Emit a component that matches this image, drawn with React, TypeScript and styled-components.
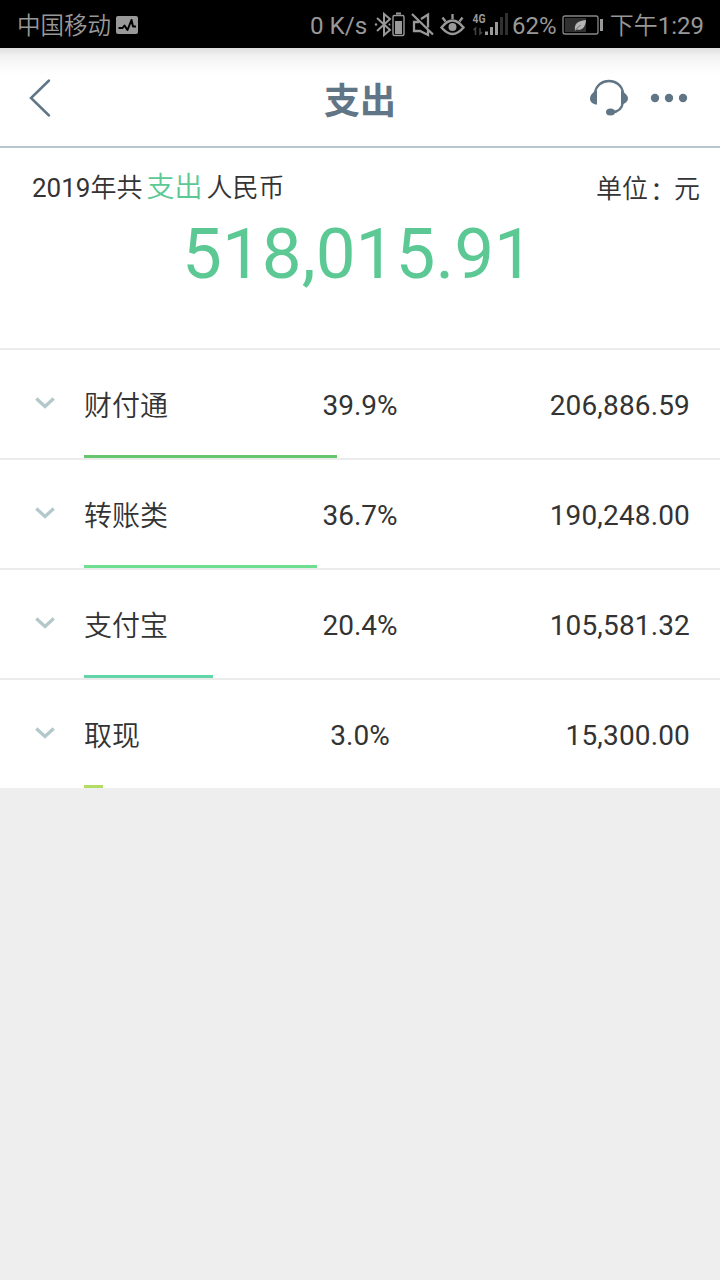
import React from "react";
import styled, { createGlobalStyle } from "styled-components";

const GlobalStyle = createGlobalStyle`
  * { box-sizing: border-box; }
  html, body, #root { height: 100%; }
  body {
    margin: 0;
    background: #eeeeee;
    color: #333333;
    font-family: Roboto, "Noto Sans CJK SC", sans-serif;
  }
`;

const Screen = styled.main`
  width: 720px;
  height: 1280px;
  overflow: hidden;
  background: #eeeeee;
`;

const StatusBar = styled.div`
  display: flex;
  align-items: center;
  height: 48px;
  padding: 2px 16px 0 17px;
  background: #000;
  color: #989898;
  font-size: 24px;
  line-height: 44px;
  white-space: nowrap;
`;

const Carrier = styled.span`
  width: 99px;
  padding-top: 2px;
  font-size: 23.5px;
  font-weight: 350;
`;

const Speed = styled.span`
  width: 64px;
  margin-left: 171px;
  padding-top: 1px;
  font-size: 24.2px;
`;

const StatusIcons = styled.svg`
  flex: none;
  display: block;
  width: 138px;
  height: 46px;
`;

const Percent = styled.span`
  width: 50px;
  padding-top: 1px;
  font-size: 24px;
`;

const Clock = styled.span`
  margin-left: auto;
  padding-top: 1px;
  font-size: 24px;
  font-weight: 350;
`;

const Digits = styled.span`
  font-weight: 400;
`;

const Header = styled.header`
  display: grid;
  grid-template-columns: 1fr auto 1fr;
  align-items: center;
  height: 100px;
  padding: 2px 28px 0;
  border-bottom: 2px solid #b8c6ce;
  background: linear-gradient(#dedede 0, #f0f0f0 7px, #fafafa 18px, #fff 28px);
`;

const Title = styled.h1`
  margin: 8px 0 0;
  color: #607585;
  font-size: 36px;
  font-weight: 700;
  line-height: 50px;
`;

const HeaderActions = styled.div`
  display: flex;
  justify-content: flex-end;
  align-items: center;
  gap: 20px;
`;

const Icon = styled.svg`
  display: block;
  flex: none;
  fill: none;
`;

const Summary = styled.section`
  height: 202px;
  padding: 20px 20px 0 32px;
  border-bottom: 2px solid #ebebeb;
  background: #fff;
`;

const SummaryLine = styled.div`
  display: flex;
  justify-content: space-between;
  height: 40px;
  font-size: 26px;
  font-weight: 350;
  line-height: 40px;
`;

const Unit = styled.span`
  display: flex;
  padding-top: 1px;
`;

const Colon = styled.span`
  width: 26px;
  padding: 2px 0 0 2px;
`;

const Accent = styled.span`
  margin: 0 4px;
  color: #5cc995;
  font-size: 28px;
`;

const Total = styled.div`
  margin-top: 1px;
  padding-right: 16px;
  color: #5cc995;
  font-size: 71px;
  line-height: 90px;
  text-align: center;
`;

const List = styled.ul`
  margin: 0;
  padding: 0;
  list-style: none;
`;

const Row = styled.li`
  height: 110px;
  border-bottom: 2px solid #ebebeb;
  background: #fff;

  &:last-child {
    height: 108px;
    border-bottom: 0;
  }
`;

const RowContent = styled.div`
  display: grid;
  grid-template-columns: 50px 176px 200px 1fr;
  align-items: center;
  height: 105px;
  padding: 0 30px 0 34px;
  font-size: 28px;
  line-height: 40px;
`;

const Share = styled.span`
  padding-top: 6px;
  text-align: center;
`;

const Name = styled.span`
  padding-top: 9px;
  font-weight: 350;
`;

const Amount = styled.span`
  padding-top: 6px;
  text-align: right;
  letter-spacing: 0.15px;
`;

const Bar = styled.div<{ $width: number; $color: string }>`
  width: ${(p) => p.$width}px;
  height: 3px;
  margin-left: 84px;
  background: ${(p) => p.$color};
`;

const categories = [
  { name: "财付通", share: "39.9%", amount: "206,886.59", width: 253, color: "#66c66d" },
  { name: "转账类", share: "36.7%", amount: "190,248.00", width: 233, color: "#6ce090" },
  { name: "支付宝", share: "20.4%", amount: "105,581.32", width: 129, color: "#62d6a8" },
  { name: "取现", share: "3.0%", amount: "15,300.00", width: 19, color: "#b2dc66" },
];

export default function App() {
  return (
    <>
      <GlobalStyle />
      <Screen>
        <StatusBar>
          <Carrier>中国移动</Carrier>
          <Icon width="23" height="20" viewBox="0 0 23 20">
            <rect x="0" y="1" width="22" height="18" rx="2" fill="#999" />
            <path d="M2.500 13h4l2-2.500 3 4.500 4-10 1.500 6.500h3" stroke="#000" strokeWidth="2" strokeLinejoin="round" />
          </Icon>
          <Speed>0 K/s</Speed>
          <StatusIcons viewBox="374 2 138 46" fill="none" stroke="#999" strokeWidth="2">
            <path d="M377 18l13 12-6 5V14l6 5-13 12" />
            <circle cx="376" cy="24.500" r="1.200" fill="#999" stroke="none" />
            <circle cx="389.500" cy="24.500" r="1" fill="#999" stroke="none" />
            <rect x="393" y="15.500" width="11" height="20" rx="1.500" strokeWidth="1.400" />
            <path d="M396 13.500h5" />
            <path d="M395 21h7v13h-7z" fill="#999" stroke="none" />
            <path d="M412 14l21 20.500M419 22h-5v9h6l8 4v-5M421 19l7-4.500v13" strokeWidth="2.300" />
            <path d="M441.500 27.500q11-14 22 0q-11 13-22 0z" strokeWidth="2.400" />
            <circle cx="452.500" cy="27" r="4" fill="#999" stroke="none" />
            <path d="M442.500 17.500l3 4M452.500 14v5M462.500 17.500l-3 4" strokeWidth="2.300" />
            <text x="472.500" y="22.500" fill="#999" stroke="none" fontSize="13" fontWeight="700" textLength="13" lengthAdjust="spacingAndGlyphs">4G</text>
            <path d="M475.500 35v-7l-2 2M480 28v6l2-2" stroke="#444" strokeWidth="1.500" />
            <path d="M486.500 31.500V35M491.500 27V35M496.500 22V35" strokeWidth="3" />
            <path d="M501.500 17V35M506.500 13V35" stroke="#303030" strokeWidth="3" />
          </StatusIcons>
          <Percent>62%</Percent>
          <Icon width="42" height="20" viewBox="562 14 42 20">
            <rect x="563" y="15" width="35" height="18" rx="2" stroke="#888" strokeWidth="1.300" />
            <path d="M565 17h21v14h-21z" fill="#303030" />
            <path d="M575 30c-1-7 2-10 11-11c-.5 7-4 11-9 9.500z" fill="#b5b5b5" />
            <path d="M574.500 30l6-6" stroke="#444" strokeWidth=".7" />
            <path d="M600 18h3v12h-3z" fill="#999" />
          </Icon>
          <Clock>下午<Digits>1:29</Digits></Clock>
        </StatusBar>

        <Header>
          <Icon width="24" height="40" viewBox="0 0 24 40">
            <path d="M21 2.500L3 20l18 17.500" stroke="#607585" strokeWidth="2.500" strokeLinecap="round" />
          </Icon>
          <Title>支出</Title>
          <HeaderActions>
            <Icon width="40" height="38" viewBox="589 79 40 38">
              <path d="M595 93C597 77 621 77 623 93M623 102C622 109 618 112 612 112" stroke="#607585" strokeWidth="2.300" />
              <path d="M597 91v13.500c-4 0-7-2.500-7-6 0-3.500 2-5 5-7.500zM621 91v13.500c4-.5 7-3 7-6 0-3.500-3-4.500-5-7.500z" fill="#607585" />
              <ellipse cx="610.500" cy="112" rx="4.500" ry="3.500" fill="#607585" />
            </Icon>
            <Icon width="43" height="12" viewBox="649 92 43 12">
              <g fill="#607585">
                <circle cx="655" cy="98" r="4.200" />
                <circle cx="669" cy="98" r="4.200" />
                <circle cx="683" cy="98" r="4.200" />
              </g>
            </Icon>
          </HeaderActions>
        </Header>

        <Summary>
          <SummaryLine>
            <span><Digits>2019</Digits>年共<Accent>支出</Accent>人民币</span>
            <Unit>单位<Colon>：</Colon>元</Unit>
          </SummaryLine>
          <Total>518,015.91</Total>
        </Summary>

        <List>
          {categories.map((c) => (
            <Row key={c.name}>
              <RowContent>
                <Icon width="22" height="14" viewBox="0 0 22 14">
                  <path d="M2.300 2.500l8.700 8 8.700-8" stroke="#b2c8ca" strokeWidth="3.200" />
                </Icon>
                <Name>{c.name}</Name>
                <Share>{c.share}</Share>
                <Amount>{c.amount}</Amount>
              </RowContent>
              <Bar $width={c.width} $color={c.color} />
            </Row>
          ))}
        </List>
      </Screen>
    </>
  );
}
